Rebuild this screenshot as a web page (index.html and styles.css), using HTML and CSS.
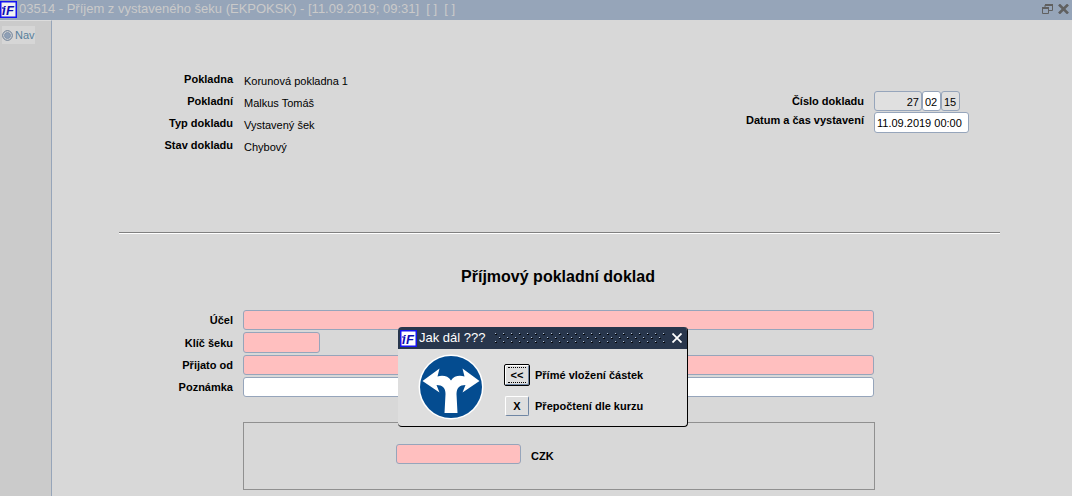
FILE: index.html
```html
<!DOCTYPE html>
<html lang="cs">
<head>
<meta charset="utf-8">
<title>Příjem z vystaveného šeku</title>
<link rel="stylesheet" href="styles.css">
</head>
<body>
<div class="window">
  <header class="titlebar">
    <svg class="logo" viewBox="0 0 17 17" aria-hidden="true">
      <rect x="0.75" y="0.75" width="15.5" height="15.5" fill="#f2f2f2" stroke="#1414f0" stroke-width="1.5"/>
      <text x="2" y="14" class="logo-text">i</text>
      <text x="6" y="14" class="logo-text">F</text>
      <path d="M2 7H5" stroke="#0c0cb4" stroke-width="1.2"/>
    </svg>
    <h1 class="title">03514 - Příjem z vystaveného šeku (EKPOKSK) - [11.09.2019; 09:31]&nbsp; [ ]&nbsp; [ ]</h1>
    <button class="win-button" type="button" aria-label="Obnovit">
      <svg width="11" height="10" viewBox="0 0 11 10" fill="none" stroke="#606060"><path d="M3 3V1M10.5 1V6.5H7M0.5 4V9.5H6.500V4"/><path d="M3 1H11M0 4H7" stroke-width="2"/></svg>
    </button>
    <button class="win-button" type="button" aria-label="Zavřít">
      <svg width="11" height="10" viewBox="0 0 11 10" fill="none" stroke="#606060" stroke-width="2.6"><path d="M1 0.500L10 9.500M10 0.500L1 9.500"/></svg>
    </button>
  </header>
  <div class="body">
    <nav class="nav">
      <a class="nav-link" href="#nav">
        <svg width="11" height="11" viewBox="0 0 11 11" fill="none" stroke="#61758e"><circle cx="5.500" cy="5.500" r="4.800" fill="#dcdcdc"/><circle cx="5.500" cy="5.500" r="3" fill="#8fa0b6" stroke="#8294ac"/></svg>
        Nav
      </a>
    </nav>
    <main class="main">
      <section class="summary">
        <dl class="facts">
          <dt>Pokladna</dt><dd>Korunová pokladna 1</dd>
          <dt>Pokladní</dt><dd>Malkus Tomáš</dd>
          <dt>Typ dokladu</dt><dd>Vystavený šek</dd>
          <dt>Stav dokladu</dt><dd>Chybový</dd>
        </dl>
        <div class="document">
          <label for="number">Číslo dokladu</label>
          <div class="number-parts">
            <input class="field number-main" id="number" value="27" readonly>
            <input class="field number-part" aria-label="Řada" value="02">
            <input class="field number-part" aria-label="Rok" value="15" readonly>
          </div>
          <label class="date-label" for="issued">Datum a čas vystavení</label>
          <input class="field date" id="issued" value="11.09.2019 00:00">
        </div>
      </section>
      <hr class="rule">
      <h2 class="heading">Příjmový pokladní doklad</h2>
      <form class="form">
        <label for="purpose">Účel</label><input class="field required" id="purpose">
        <label for="key">Klíč šeku</label><input class="field required short" id="key">
        <label for="from">Přijato od</label><input class="field required" id="from">
        <label for="note">Poznámka</label><input class="field" id="note">
        <div class="amount">
          <input class="field required amount-field" id="amount">
          <label class="currency" for="amount">CZK</label>
        </div>
      </form>
    </main>
  </div>
  <div class="dialog" role="dialog" aria-labelledby="dialog-title">
    <div class="dialog-bar">
      <svg class="logo" viewBox="0 0 17 17" aria-hidden="true">
        <rect x="0.75" y="0.75" width="15.5" height="15.5" fill="#fff" stroke="#1414f0" stroke-width="1.5"/>
        <text x="2" y="14" class="logo-text">i</text>
        <text x="6" y="14" class="logo-text">F</text>
        <path d="M2 7H5" stroke="#0c0cb4" stroke-width="1.2"/>
      </svg>
      <h2 class="dialog-title" id="dialog-title">Jak dál ???</h2>
      <svg class="grip" aria-hidden="true">
        <defs>
          <pattern id="bumps" width="8" height="8" patternUnits="userSpaceOnUse">
            <path d="M1 0h1v1h-1zM5 4h1v1h-1z" fill="#b4c4d8"/>
            <path d="M2 1h1v1h-2v-1zM6 5h1v1h-2v-1z" fill="#06080c"/>
          </pattern>
        </defs>
        <rect width="100%" height="100%" fill="url(#bumps)"/>
      </svg>
      <button class="dialog-close" type="button" aria-label="Zavřít">
        <svg width="10" height="10" viewBox="0 0 10 10" stroke="#fff" stroke-width="1.8"><path d="M0.500 0.500L9.500 9.500M9.500 0.500L0.500 9.500"/></svg>
      </button>
    </div>
    <div class="dialog-body">
      <svg class="sign" viewBox="0 0 66 66" aria-hidden="true">
        <circle cx="33" cy="33" r="32.500" fill="#fff"/>
        <circle cx="33" cy="33" r="31" fill="#044c90"/>
        <path d="M26.500 59L27.500 40C27.500 34 24.500 31 18.500 31L21.500 38.500L4.500 27L21.500 14.500L19.500 22.500C25 21 30 22 33 26.500C36 22 41 21 46.500 22.500L44.500 14.500L61.500 27L44.500 38.500L47.500 31C41.500 31 38.500 34 38.500 40L39.500 59Z" fill="#fff"/>
      </svg>
      <div class="choices">
        <button class="choice default" id="direct" type="button"><span class="choice-focus">&lt;&lt;</span></button>
        <label for="direct">Přímé vložení částek</label>
        <button class="choice" id="convert" type="button">X</button>
        <label for="convert">Přepočtení dle kurzu</label>
      </div>
    </div>
  </div>
</div>
</body>
</html>
```
FILE: styles.css
```css
* { box-sizing: border-box; }

body {
  margin: 0;
  background: #d8d8d8;
  color: #000;
  font: 11px/14px "Liberation Sans", Arial, sans-serif;
}

h1, h2, dl, dd { margin: 0; }
svg { display: block; }
button { padding: 0; font: inherit; }
label, dt { font-weight: bold; }

.window {
  position: relative;
  display: flex;
  flex-direction: column;
  min-height: 100vh;
}

.titlebar {
  display: flex;
  align-items: center;
  gap: 5px;
  height: 20px;
  padding: 0 3px 2px 0;
  background: #96a5b9;
}

.logo { flex: none; width: 17px; height: 17px; }
.logo-text { font: italic bold 13px "Liberation Sans", Arial, sans-serif; fill: #0c0cb4; }

.title {
  flex: 1;
  margin-left: -3px;
  color: #cacaca;
  font-size: 13px;
  font-weight: normal;
  line-height: 18px;
}

.win-button { border: 0; background: none; }

.body { display: flex; flex: 1; }

.nav {
  flex: none;
  width: 52px;
  padding: 5px 2px;
  background: #cbcbcb;
  border-top: 1px solid #dcdcdc;
  border-right: 1px solid #96a5b9;
}

.nav-link {
  display: inline-flex;
  align-items: center;
  gap: 2px;
  height: 18px;
  background: #d6d6d6;
  color: #57809c;
  text-decoration: none;
}

.main { flex: 1; padding: 52px 72px 0 67px; }

.summary {
  display: flex;
  justify-content: space-between;
  padding-right: 31px;
}

.facts {
  display: grid;
  grid-template-columns: 114px auto;
  grid-auto-rows: 20px;
  gap: 2px 11px;
}

.facts dt { text-align: right; }
.facts dd { padding-top: 2px; }

.document {
  display: grid;
  grid-template-columns: auto 95px;
  align-content: start;
  gap: 1px 10px;
  padding-top: 19px;
}

.document label { align-self: center; text-align: right; }
.document .date-label { align-self: start; padding-top: 1px; }
.number-parts { display: flex; }

.field {
  width: 100%;
  height: 20px;
  padding: 1px 2px 0;
  border: 1px solid #96a5bb;
  border-radius: 3px;
  background: #fff;
  color: #000;
  font: inherit;
}

.field:read-only { background: #e0e0e0; }
.required { background: #ffbfbf; }
.number-main { width: 48px; text-align: right; }
.number-part { width: 19px; }
.date { height: 21px; }

.rule {
  height: 2px;
  margin: 74px 0 34px;
  border: 0;
  border-top: 1px solid #808080;
  background: #fff;
}

.heading {
  margin-right: 3px;
  font-size: 16px;
  line-height: 18px;
  text-align: center;
}

.form {
  display: grid;
  grid-template-columns: 114px 1fr;
  align-items: center;
  gap: 2px 10px;
  margin-top: 24px;
  padding-right: 126px;
}

.form > label { text-align: right; }
.form .short { width: 77px; height: 21px; }

.amount {
  grid-column: 2;
  display: flex;
  align-items: center;
  gap: 10px;
  height: 68px;
  margin: 23px -1px 4px 0;
  padding: 0 0 4px 152px;
  border: 1px solid #909090;
}

.amount-field { width: 125px; }
.currency { padding-top: 3px; }

.dialog {
  position: absolute;
  top: 327px;
  left: 398px;
  width: 290px;
  border: solid #000;
  border-width: 0 1px 1px 0;
  border-radius: 4px;
  background: #dedede;
  overflow: hidden;
}

.dialog-bar {
  display: flex;
  align-items: center;
  height: 22px;
  padding: 0 5px 0 2px;
  background: #28364c;
}

.dialog-title {
  margin: 0 8px 0 2px;
  color: #fff;
  font-size: 13px;
  font-weight: normal;
  line-height: 18px;
}

.grip { flex: 1; width: 0; height: 10px; }

.dialog-close { margin-left: 6px; border: 0; background: none; }

.dialog-body {
  display: flex;
  align-items: center;
  gap: 20px;
  padding: 5px 20px 6px;
}

.sign { flex: none; width: 66px; height: 66px; }

.choices {
  display: grid;
  grid-template-columns: 26px auto;
  align-items: center;
  justify-items: center;
  gap: 10px 5px;
  padding-top: 6px;
}

.choice {
  display: grid;
  place-items: center;
  width: 24px;
  height: 20px;
  border: 1px solid #6f86a4;
  border-top-color: #fff;
  border-left-color: #fff;
  border-radius: 2px;
  background: #dedede;
  font-weight: bold;
}

.default {
  width: 26px;
  height: 22px;
  border-color: #000;
  box-shadow: inset 1px 1px #fff, inset -1px -1px #6f86a4;
}

.choice-focus {
  width: 18px;
  border: dotted #000;
  border-width: 1px 0;
}
```
